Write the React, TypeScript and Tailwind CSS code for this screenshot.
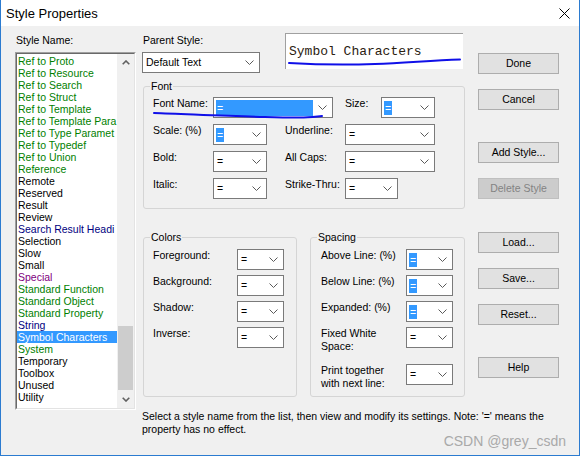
import React from "react";

type HL = "none" | "small" | "wide";

const G = "text-[#008000]";
const K = "text-black";
const N = "text-[#000080]";
const P = "text-[#800080]";

const styles: [string, string][] = [
  ["Ref to Proto", G],
  ["Ref to Resource", G],
  ["Ref to Search", G],
  ["Ref to Struct", G],
  ["Ref to Template", G],
  ["Ref to Template Para", G],
  ["Ref to Type Paramet", G],
  ["Ref to Typedef", G],
  ["Ref to Union", G],
  ["Reference", G],
  ["Remote", K],
  ["Reserved", K],
  ["Result", K],
  ["Review", K],
  ["Search Result Headi", N],
  ["Selection", K],
  ["Slow", K],
  ["Small", K],
  ["Special", P],
  ["Standard Function", G],
  ["Standard Object", G],
  ["Standard Property", G],
  ["String", N],
  ["Symbol Characters", "selected"],
  ["System", G],
  ["Temporary", K],
  ["Toolbox", K],
  ["Unused", K],
  ["Utility", K],
];

function Chevron() {
  return (
    <svg width="9" height="5" viewBox="0 0 9 5" className="mr-[5px] shrink-0">
      <path d="M0.5 0.5L4.5 4.5L8.5 0.5" fill="none" stroke="#5a5a5a" strokeWidth="1" />
    </svg>
  );
}

function Combo({ w, text = "=", hl = "none" }: { w: string; text?: string; hl?: HL }) {
  return (
    <div className={`flex h-[21px] shrink-0 items-center border border-[#7a7a7a] bg-white ${w}`}>
      <div className="flex min-w-0 flex-1 items-center pl-[2px] pr-[5px]">
        {hl === "wide" ? (
          <span className="block h-[16px] w-full bg-[#3399ff] pl-[1px] leading-[16px] text-white">{text}</span>
        ) : hl === "small" ? (
          <span className="block h-[14px] bg-[#3399ff] px-[1px] leading-[14px] text-white">{text}</span>
        ) : (
          <span className="whitespace-nowrap pl-[1px]">{text}</span>
        )}
      </div>
      <Chevron />
    </div>
  );
}

function Btn({ label, mt, disabled }: { label: string; mt: string; disabled?: boolean }) {
  return (
    <button
      className={`h-[21px] w-[81px] border text-center leading-[19px] ${mt} ${
        disabled ? "border-[#bfbfbf] bg-[#cccccc] text-[#838383]" : "border-[#adadad] bg-[#e1e1e1] text-black"
      }`}
    >
      {label}
    </button>
  );
}

function ScrollArrow({ up }: { up?: boolean }) {
  return (
    <div className="flex h-[17px] items-center justify-center">
      <svg width="8" height="5" viewBox="0 0 8 5">
        <path
          d={up ? "M0.7 4.3L4 1L7.3 4.3" : "M0.7 0.7L4 4L7.3 0.7"}
          fill="none"
          stroke="#606060"
          strokeWidth="1.6"
        />
      </svg>
    </div>
  );
}

export default function App() {
  return (
    <div className="relative h-[456px] w-[580px] overflow-hidden border-x border-b border-[#2b7bd0] bg-[#f0f0f0] font-['Liberation_Sans',Arial,sans-serif] text-[10.5px] leading-[13px] text-black">
      {/* title bar */}
      <div className="flex h-[26px] items-center justify-between bg-white pl-[5px] pr-[9px]">
        <span className="text-[13px]">Style Properties</span>
        <svg width="11" height="11" viewBox="0 0 11 11">
          <path d="M0.5 0.5L10.5 10.5M10.5 0.5L0.5 10.5" stroke="#000" strokeWidth="1" />
        </svg>
      </div>

      <div className="flex pl-[14px] pt-[8px]">
        {/* left: style list */}
        <div className="w-[121px] shrink-0">
          <div className="pl-[1px]">Style Name:</div>
          <div className="mt-[5px] h-[358px] border border-b-white border-l-[#a0a0a0] border-r-white border-t-[#a0a0a0]">
            <div className="flex h-full border border-b-[#e3e3e3] border-l-[#696969] border-r-[#e3e3e3] border-t-[#696969] bg-white">
              <div className="w-[100px] overflow-hidden pt-[1px] leading-[12px]">
                {styles.map(([name, c]) =>
                  c === "selected" ? (
                    <div key={name} className="h-[12px] whitespace-nowrap bg-[#3399ff] pl-[1px] text-white">
                      {name}
                    </div>
                  ) : (
                    <div key={name} className={`h-[12px] whitespace-nowrap pl-[1px] ${c}`}>
                      {name}
                    </div>
                  )
                )}
              </div>
              <div className="flex w-[17px] flex-col bg-[#f0f0f0]">
                <ScrollArrow up />
                <div className="flex-1" />
                <div className="mx-[1px] mb-[1px] h-[64px] bg-[#cdcdcd]" />
                <ScrollArrow />
              </div>
            </div>
          </div>
        </div>

        {/* right area */}
        <div className="ml-[6px] flex flex-col">
          <div className="flex">
            {/* middle column */}
            <div className="w-[323px] shrink-0">
              <div className="flex items-start">
                <div className="w-[118px] shrink-0">
                  <div className="pl-[1px]">Parent Style:</div>
                  <div className="mt-[5px]">
                    <Combo w="w-[118px]" text="Default Text" />
                  </div>
                </div>
                <div className="-mt-px ml-[25px] h-[36px] w-[178px] border-l border-t border-[#a0a0a0] bg-white pl-[3px] pt-[11px] font-['Liberation_Mono',monospace] text-[13px] leading-[13px] text-[#2a2010]">
                  Symbol Characters
                </div>
              </div>

              <fieldset className="ml-[1px] mt-[7px] w-[322px] rounded-[3px] border border-[#d5d5d5]">
                <legend className="ml-[6px] px-[1px] leading-[13px]">Font</legend>
                <div className="flex flex-col gap-[6px] pb-[9px] pl-[9px] pt-[4px]">
                  <div className="flex items-start">
                    <div className="w-[60px] shrink-0">Font Name:</div>
                    <Combo w="w-[120px]" hl="wide" />
                    <div className="ml-[12px] w-[36px] shrink-0">Size:</div>
                    <Combo w="w-[54px]" hl="small" />
                  </div>
                  <div className="flex items-start">
                    <div className="w-[60px] shrink-0">Scale: (%)</div>
                    <Combo w="w-[54px]" hl="small" />
                    <div className="ml-[18px] w-[60px] shrink-0">Underline:</div>
                    <Combo w="w-[90px]" />
                  </div>
                  <div className="flex items-start">
                    <div className="w-[60px] shrink-0">Bold:</div>
                    <Combo w="w-[54px]" />
                    <div className="ml-[18px] w-[60px] shrink-0">All Caps:</div>
                    <Combo w="w-[90px]" />
                  </div>
                  <div className="flex items-start">
                    <div className="w-[60px] shrink-0">Italic:</div>
                    <Combo w="w-[54px]" />
                    <div className="ml-[18px] w-[60px] shrink-0">Strike-Thru:</div>
                    <Combo w="w-[53px]" />
                  </div>
                </div>
              </fieldset>

              <div className="ml-[1px] mt-[22px] flex gap-[13px]">
                <fieldset className="w-[154px] rounded-[3px] border border-[#d5d5d5]">
                  <legend className="ml-[6px] px-[1px] leading-[13px]">Colors</legend>
                  <div className="flex flex-col gap-[5px] pl-[9px] pt-[5px]">
                    {["Foreground:", "Background:", "Shadow:", "Inverse:"].map((l) => (
                      <div key={l} className="flex items-start">
                        <div className="w-[84px] shrink-0">{l}</div>
                        <Combo w="w-[47px]" />
                      </div>
                    ))}
                  </div>
                </fieldset>
                <fieldset className="w-[155px] rounded-[3px] border border-[#d5d5d5]">
                  <legend className="ml-[6px] px-[1px] leading-[13px]">Spacing</legend>
                  <div className="flex flex-col gap-[5px] pb-[6px] pl-[10px] pt-[5px]">
                    <div className="flex items-start">
                      <div className="w-[85px] shrink-0">Above Line: (%)</div>
                      <Combo w="w-[47px]" hl="small" />
                    </div>
                    <div className="flex items-start">
                      <div className="w-[85px] shrink-0">Below Line: (%)</div>
                      <Combo w="w-[47px]" hl="small" />
                    </div>
                    <div className="flex items-start">
                      <div className="w-[85px] shrink-0">Expanded: (%)</div>
                      <Combo w="w-[47px]" hl="small" />
                    </div>
                    <div className="flex items-start">
                      <div className="w-[85px] shrink-0">
                        Fixed White
                        <br />
                        Space:
                      </div>
                      <Combo w="w-[47px]" />
                    </div>
                    <div className="mt-[6px] flex items-start">
                      <div className="w-[85px] shrink-0">
                        Print together
                        <br />
                        with next line:
                      </div>
                      <Combo w="w-[47px]" />
                    </div>
                  </div>
                </fieldset>
              </div>
            </div>

            {/* buttons */}
            <div className="ml-[13px] flex w-[81px] shrink-0 flex-col">
              <Btn label="Done" mt="mt-[19px]" />
              <Btn label="Cancel" mt="mt-[15px]" />
              <Btn label="Add Style..." mt="mt-[32px]" />
              <Btn label="Delete Style" mt="mt-[15px]" disabled />
              <Btn label="Load..." mt="mt-[33px]" />
              <Btn label="Save..." mt="mt-[15px]" />
              <Btn label="Reset..." mt="mt-[15px]" />
              <Btn label="Help" mt="mt-[32px]" />
            </div>
          </div>

          <p className="mt-[13px] whitespace-nowrap">
            Select a style name from the list, then view and modify its settings. Note: '=' means the
            <br />
            property has no effect.
          </p>
        </div>
      </div>

      {/* watermark */}
      <div className="absolute bottom-[6px] right-[13px] text-[14px] leading-[16px] text-[#a9a9a9]">
        CSDN @grey_csdn
      </div>

      {/* hand-drawn annotations */}
      <svg
        className="pointer-events-none absolute left-[-1px] top-0"
        width="580"
        height="457"
        viewBox="0 0 580 457"
      >
        <path
          d="M289 63 C 315 64.5, 345 65, 375 64 S 430 60.5, 460 59.5"
          fill="none"
          stroke="#1010e8"
          strokeWidth="2"
          strokeLinecap="round"
        />
        <path
          d="M154 113 C 185 114, 225 116, 265 117 S 305 117.5, 322 116"
          fill="none"
          stroke="#1010e8"
          strokeWidth="2"
          strokeLinecap="round"
        />
      </svg>
    </div>
  );
}
